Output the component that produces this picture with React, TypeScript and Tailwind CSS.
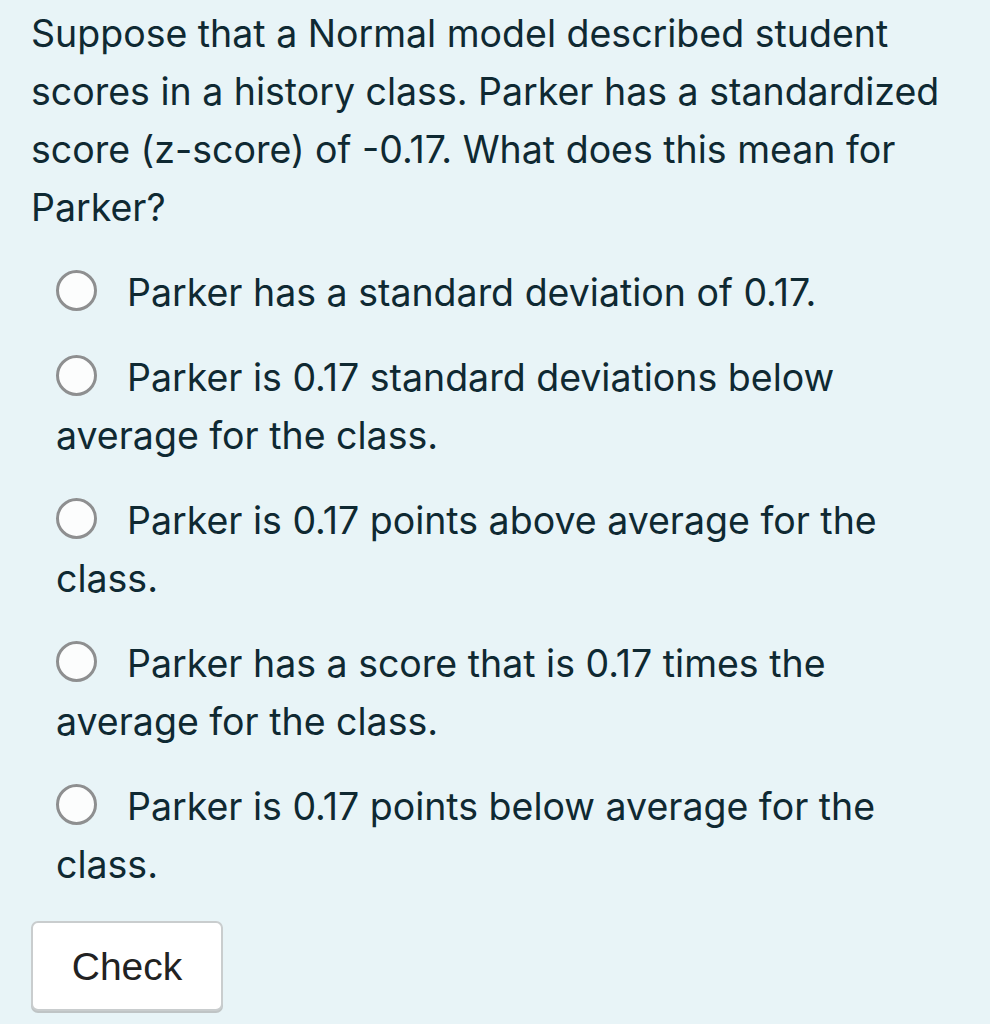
import React from "react";

const options: string[][] = [
  ["Parker has a standard deviation of 0.17."],
  ["Parker is 0.17 standard deviations below", "average for the class."],
  ["Parker is 0.17 points above average for the", "class."],
  ["Parker has a score that is 0.17 times the", "average for the class."],
  ["Parker is 0.17 points below average for the", "class."],
];

function Radio() {
  return (
    <span className="inline-block align-middle w-[41px] h-[41px] rounded-full border-[3px] border-[#8e8f90] bg-[#fcfdfd] mr-[30px] relative top-[-5px]" />
  );
}

export default function App() {
  return (
    <div
      className="w-[990px] h-[1024px] bg-[#e8f4f7] text-[#0f2932] overflow-hidden"
      style={{ fontFamily: "Inter, 'Noto Sans', sans-serif" }}
    >
      <div className="pl-[31px] pt-[5px] text-[37.5px] leading-[58px] whitespace-nowrap">
        <p>
          Suppose that a Normal model described student
          <br />
          scores in a history class. Parker has a standardized
          <br />
          score (z-score) of -0.17. What does this mean for
          <br />
          Parker?
        </p>
        <div className="mt-[27px] pl-[25px] flex flex-col gap-[27px]">
          {options.map((lines, i) => (
            <div key={i}>
              <Radio />
              {lines.map((l, j) => (
                <React.Fragment key={j}>
                  {j > 0 && <br />}
                  {l}
                </React.Fragment>
              ))}
            </div>
          ))}
        </div>
        <button
          className="mt-[27px] w-[192px] h-[90px] bg-white rounded-[7px] border-2 border-[#c9cdce] shadow-[0_2px_0_#bfc4c5] text-[#222] text-[39px] leading-none"
          style={{ fontFamily: "'Liberation Sans', Arial, sans-serif" }}
        >
          Check
        </button>
      </div>
    </div>
  );
}
